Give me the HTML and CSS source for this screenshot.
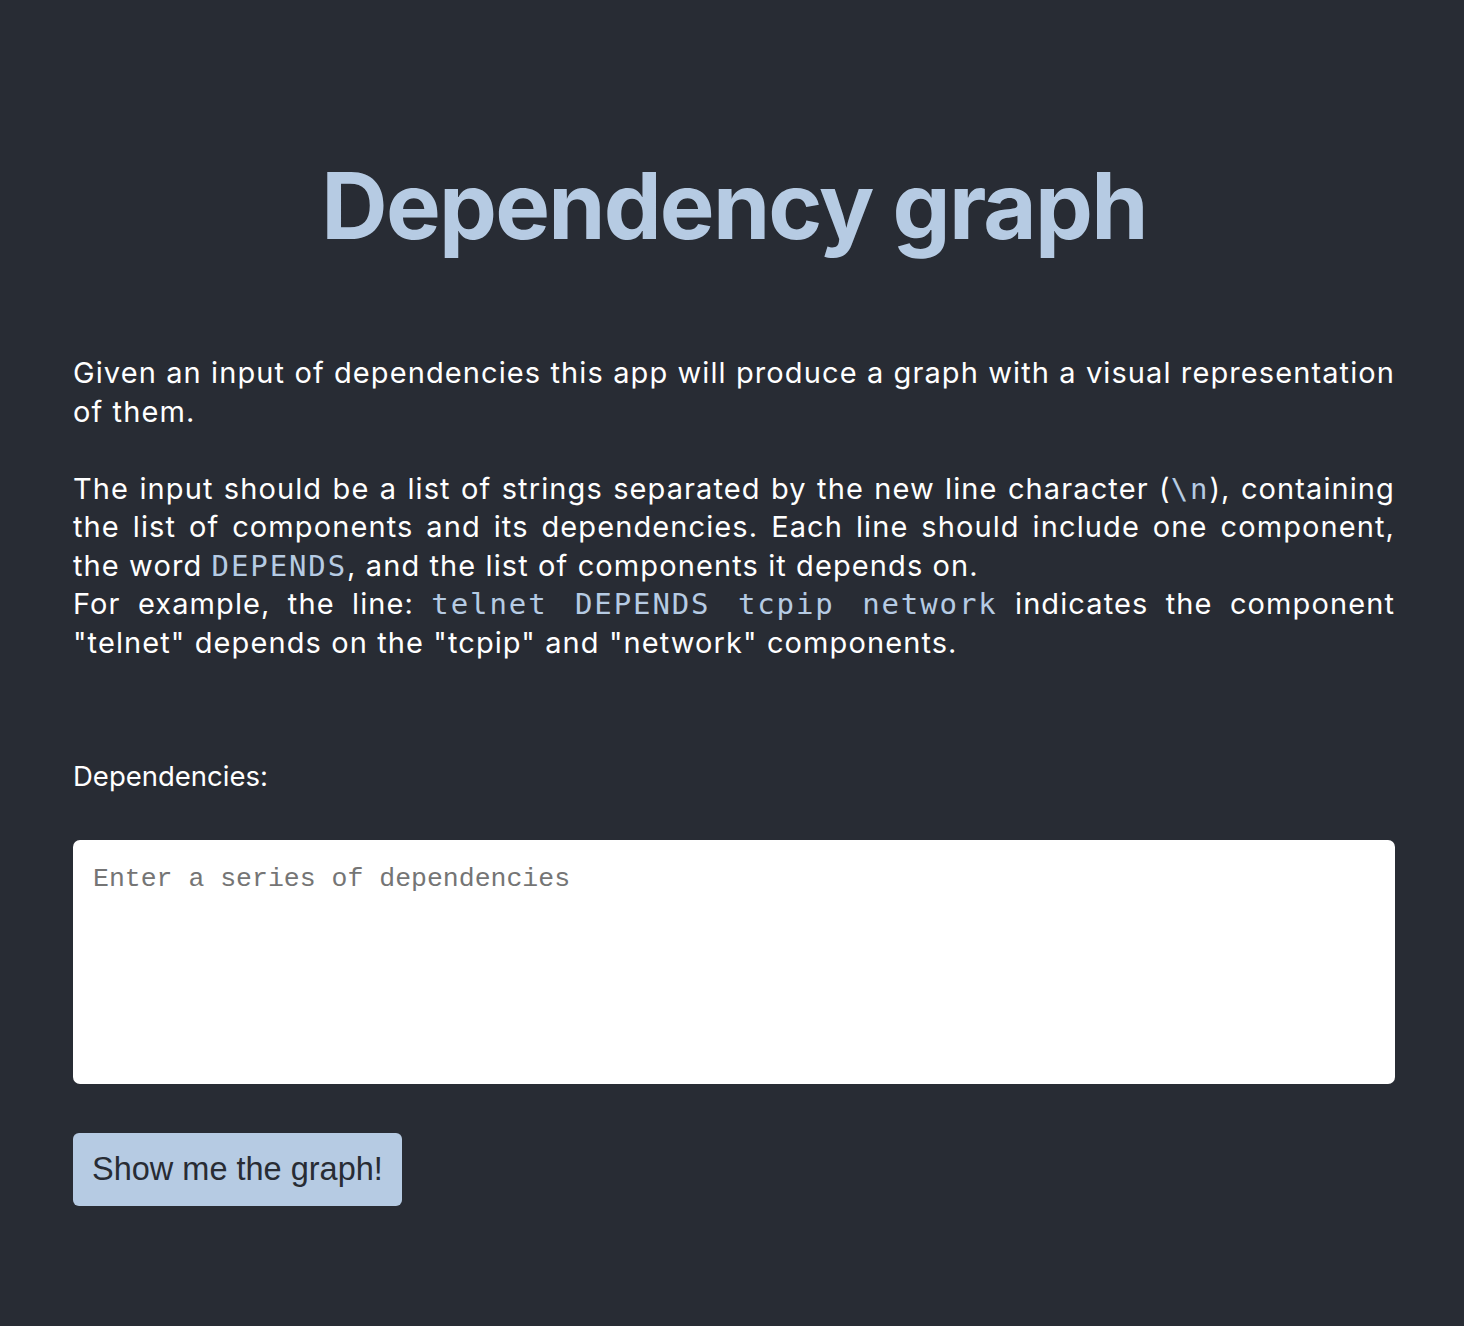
FILE: index.html
```html
<!DOCTYPE html>
<html>
<head>
<meta charset="utf-8">
<link rel="stylesheet" href="styles.css">
</head>
<body>
<main class="app">
  <h1 class="title">Dependency graph</h1>
  <section class="intro">
    <p>Given an input of dependencies this app will produce a graph with a visual representation of them.</p>
    <p>The input should be a list of strings separated by the new line character (<code>\n</code>), containing the list of components and its dependencies. Each line should include one component, the word <code>DEPENDS</code>, and the list of components it depends on.<br>For example, the line: <code>telnet DEPENDS tcpip network</code> indicates the component "telnet" depends on the "tcpip" and "network" components.</p>
  </section>
  <form class="form">
    <label class="label" for="deps">Dependencies:</label>
    <textarea id="deps" class="input" placeholder="Enter a series of dependencies"></textarea>
    <button type="button" class="btn">Show me the graph!</button>
  </form>
</main>
</body>
</html>
```

FILE: styles.css
```css
html, body {
  margin: 0;
  padding: 0;
  background: #282c34;
}
body {
  min-height: 1326px;
  color: #ffffff;
  font-family: Inter, "Noto Sans", sans-serif;
}
.app {
  padding: 0 69px 0 73px;
  display: flex;
  flex-direction: column;
}
.title {
  margin: 150px 0 0;
  text-align: center;
  font-family: Inter, "Liberation Sans", sans-serif;
  font-weight: 700;
  font-size: 92px;
  letter-spacing: -1.8px;
  line-height: 112px;
  color: #b6cbe3;
}
.intro {
  margin-top: 92px;
  font-size: 29px;
  letter-spacing: 1.1px;
  line-height: 38.5px;
  text-align: justify;
}
.intro p {
  margin: 0 0 38.5px;
}
.intro code {
  font-family: "DejaVu Sans Mono", monospace;
  font-size: 29px;
  line-height: 1;
  letter-spacing: 1.9px;
  color: #b6cbe3;
}
.form {
  margin-top: 59px;
  display: flex;
  flex-direction: column;
  align-items: flex-start;
}
.label {
  font-family: Inter, sans-serif;
  font-size: 27.5px;
  line-height: 32px;
  color: #ffffff;
}
.input {
  margin-top: 48px;
  box-sizing: border-box;
  width: 100%;
  height: 244px;
  border: none;
  border-radius: 7px;
  padding: 24px 20px 20px;
  background: #ffffff;
  font-family: "Liberation Mono", monospace;
  font-size: 26.5px;
  resize: none;
  outline: none;
}
.input::placeholder {
  color: #757575;
}
.btn {
  margin-top: 49px;
  border: none;
  border-radius: 6px;
  background: #b6cbe3;
  color: #282c34;
  font-family: "Liberation Sans", Arial, sans-serif;
  font-size: 32.5px;
  padding: 0 19px;
  height: 73px;
}
```
